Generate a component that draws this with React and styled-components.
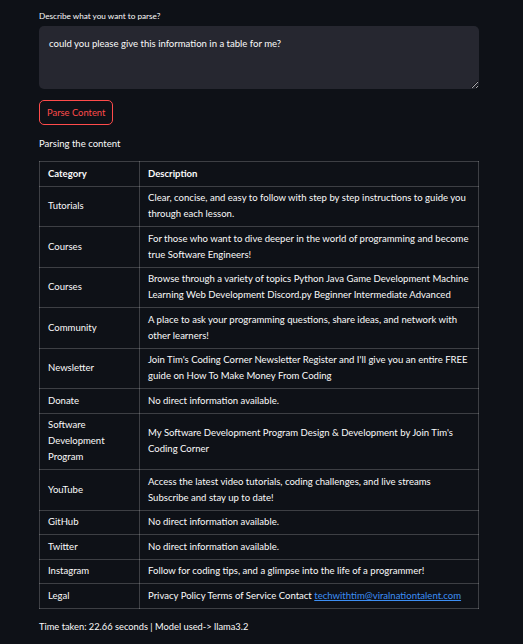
import React from 'react';
import styled, { createGlobalStyle } from 'styled-components';

const Global = createGlobalStyle`
  html, body {
    margin: 0;
    padding: 0;
    background: #0e1117;
    color-scheme: dark;
  }
  body {
    font-family: "Lato", "Noto Sans", sans-serif;
    color: #fafafa;
  }
`;

const Page = styled.div`
  width: 440px;
  padding: 10px 0 20px 39px;
  display: flex;
  flex-direction: column;
`;

const Label = styled.label`
  font-size: 8.2px;
  line-height: 12px;
  color: #fafafa;
  margin-bottom: 4px;
`;

const TextArea = styled.textarea`
  box-sizing: border-box;
  width: 440px;
  height: 63px;
  background: #262730;
  border: none;
  border-radius: 5px;
  color: #fafafa;
  font-family: inherit;
  font-size: 9.55px;
  line-height: 16px;
  padding: 10px 10px;
  resize: vertical;
  outline: none;
`;

const ParseButton = styled.button`
  align-self: flex-start;
  margin-top: 11px;
  height: 25px;
  padding: 0 7px;
  background: transparent;
  border: 1px solid #ff4b4b;
  border-radius: 5px;
  color: #ff4b4b;
  font-family: inherit;
  font-size: 9.4px;
`;

const Text = styled.p`
  margin: ${p => p.$top || 0}px 0 0;
  font-size: ${p => p.$size || 9.55}px;
  line-height: 16px;
  color: #fafafa;
`;

const Table = styled.table`
  margin-top: 9px;
  width: 440px;
  border-collapse: collapse;
  table-layout: fixed;
  font-size: 9.55px;
  line-height: 16px;
`;

const Cell = styled.td`
  border: 1px solid rgba(250, 250, 250, 0.2);
  padding: 3.75px 8px;
  text-align: left;
  vertical-align: middle;
  font-weight: ${p => (p.$head ? 700 : 400)};
`;

const Mail = styled.a`
  color: #3d8ff5;
  text-decoration: underline;
`;

const rows = [
  ['Tutorials', 'Clear, concise, and easy to follow with step by step instructions to guide you through each lesson.'],
  ['Courses', 'For those who want to dive deeper in the world of programming and become true Software Engineers!'],
  ['Courses', 'Browse through a variety of topics Python Java Game Development Machine Learning Web Development Discord.py Beginner Intermediate Advanced'],
  ['Community', 'A place to ask your programming questions, share ideas, and network with other learners!'],
  ['Newsletter', "Join Tim's Coding Corner Newsletter Register and I'll give you an entire FREE guide on How To Make Money From Coding"],
  ['Donate', 'No direct information available.'],
  ['Software Development Program', "My Software Development Program Design & Development by Join Tim's Coding Corner"],
  ['YouTube', 'Access the latest video tutorials, coding challenges, and live streams Subscribe and stay up to date!'],
  ['GitHub', 'No direct information available.'],
  ['Twitter', 'No direct information available.'],
  ['Instagram', 'Follow for coding tips, and a glimpse into the life of a programmer!'],
];

export default function App() {
  return (
    <>
      <Global />
      <Page>
        <Label>Describe what you want to parse?</Label>
        <TextArea defaultValue="could you please give this information in a table for me?" />
        <ParseButton>Parse Content</ParseButton>
        <Text $top={11}>Parsing the content</Text>
        <Table>
          <colgroup>
            <col style={{ width: 100 }} />
            <col />
          </colgroup>
          <thead>
            <tr>
              <Cell as="th" $head>Category</Cell>
              <Cell as="th" $head>Description</Cell>
            </tr>
          </thead>
          <tbody>
            {rows.map(([cat, desc], i) => (
              <tr key={i}>
                <Cell>{cat}</Cell>
                <Cell>{desc}</Cell>
              </tr>
            ))}
            <tr>
              <Cell>Legal</Cell>
              <Cell>
                Privacy Policy Terms of Service Contact{' '}
                <Mail href="mailto:techwithtim@viralnationtalent.com">techwithtim@viralnationtalent.com</Mail>
              </Cell>
            </tr>
          </tbody>
        </Table>
        <Text $top={10} $size={9.3}>Time taken: 22.66 seconds | Model used-&gt; llama3.2</Text>
      </Page>
    </>
  );
}
